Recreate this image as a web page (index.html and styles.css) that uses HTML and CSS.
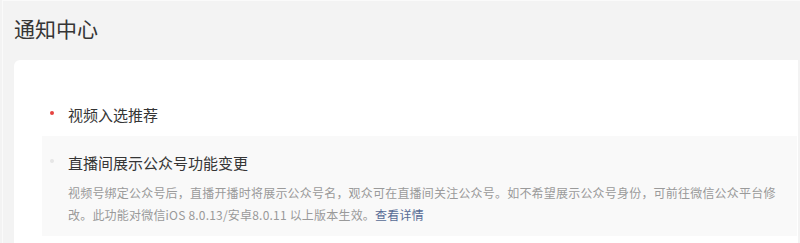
FILE: index.html
```html
<!DOCTYPE html>
<html lang="zh-CN">
<head>
  <meta charset="UTF-8">
  <meta name="viewport" content="width=device-width, initial-scale=1.0">
  <title>通知中心</title>
  <link rel="stylesheet" href="styles.css">
</head>
<body>
  <div class="page">
    <header class="page-header">
      <h1>通知中心</h1>
    </header>

    <!-- 通知列表 -->
    <div class="card">
      <ul class="notice-list">
        <li class="notice unread">
          <div class="notice-title">视频入选推荐</div>
        </li>
        <li class="notice read expanded">
          <div class="notice-title">直播间展示公众号功能变更</div>
          <p class="notice-desc">视频号绑定公众号后，直播开播时将展示公众号名，观众可在直播间关注公众号。如不希望展示公众号身份，可前往微信公众平台修改。此功能对微信iOS 8.0.13/安卓8.0.11 以上版本生效。<a href="#" class="notice-link">查看详情</a></p>
        </li>
      </ul>
    </div>
  </div>
</body>
</html>
```

FILE: styles.css
```css
body {
  margin: 0;
  padding: 0;
  background-color: #f3f3f3;
  font-family: "Microsoft YaHei", "Noto Sans CJK SC", sans-serif;
  color: #353535;
  overflow: hidden;
}
.page {
  margin-left: 2px;
  border-left: 1px solid #fafafa;
  border-top: 1px solid #fafafa;
  min-height: 243px;
}
.page-header {
  height: 59px;
  padding-left: 11px;
}
h1 {
  margin: 0;
  font-size: 21px;
  font-weight: normal;
  line-height: 55px;
  color: #353535;
}
.card {
  margin-left: 11px;
  margin-right: 2px;
  padding-left: 28px;
  padding-right: 1px;
  background-color: #fff;
  border-top-left-radius: 6px;
  min-height: 200px;
}
.notice-list {
  list-style: none;
  margin: 0;
  padding: 28px 0 0;
}
.notice {
  position: relative;
  padding: 16px 10px 10px 26px;
}
.notice::before {
  content: "";
  position: absolute;
  left: 8px;
  top: 23px;
  width: 4px;
  height: 4px;
  border-radius: 50%;
}
.notice.unread::before {
  background-color: #e64340;
}
.notice.read::before {
  background-color: #e6e6e6;
}
.notice.expanded {
  background-color: #f9f9f9;
}
.notice-title {
  font-size: 15px;
  line-height: 22px;
}
.notice-desc {
  margin: 8px 0 0;
  font-size: 12px;
  letter-spacing: 0.2px;
  line-height: 22px;
  color: #9a9a9a;
}
.notice-link {
  color: #576b95;
  text-decoration: none;
}
```
